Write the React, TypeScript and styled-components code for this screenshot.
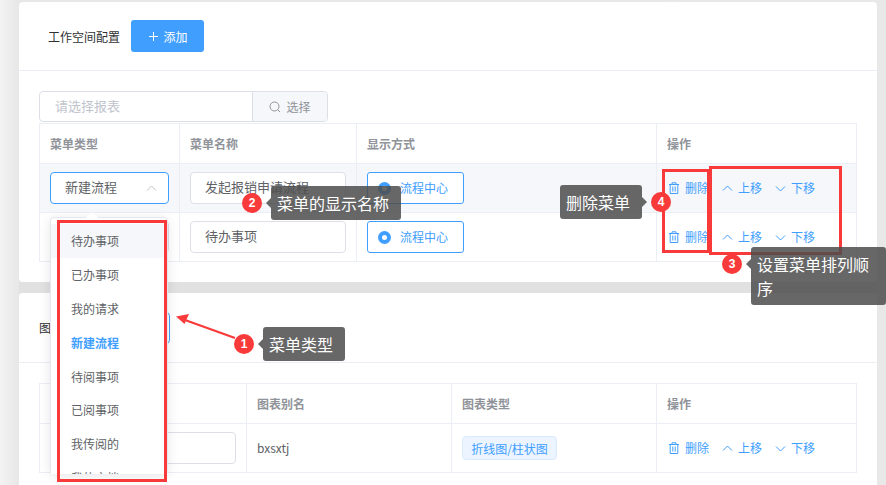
import React from 'react'
import styled, { createGlobalStyle } from 'styled-components'

const blue = '#409eff'
const line = '#ebeef5'
const red = '#f93a3a'

const GlobalStyle = createGlobalStyle`
  html, body {
    margin: 0;
    height: 485px;
    overflow: hidden;
    background: #e8e8e8;
  }
  body, input, button {
    font-family: "Noto Sans CJK SC", "Noto Sans", sans-serif;
  }
`

const Page = styled.div`
  position: relative;
  width: 886px;
  height: 485px;
  overflow: hidden;
  box-sizing: border-box;
  padding: 2px 9px 0 19px;
  background: linear-gradient(90deg, #f3f3f3 0, #e7e7e7 19px, #e8e8e8 100%);
`

const Card = styled.section<{ $height: number }>`
  background: #fff;
  border-radius: 4px;
  height: ${p => p.$height}px;
  box-sizing: border-box;
`

const Gap = styled.div`
  height: 11px;
  background: #e1e1e1;
`

const CardHeader = styled.header<{ $inset: number; $height: number }>`
  display: flex;
  align-items: center;
  gap: 11px;
  height: ${p => p.$height}px;
  box-sizing: border-box;
  padding-left: ${p => p.$inset}px;
  border-bottom: 1px solid ${line};
`

const Title = styled.span`
  font-size: 12px;
  color: #303133;
`

const AddButton = styled.button`
  display: flex;
  align-items: center;
  gap: 5px;
  width: 73px;
  height: 32px;
  justify-content: center;
  border: 0;
  border-radius: 3px;
  background: ${blue};
  color: #fff;
  font-size: 12px;
`

const CardBody = styled.div<{ $top: number }>`
  padding: ${p => p.$top}px 20px 0;
`

const ReportPicker = styled.div`
  display: flex;
  width: 289px;
  height: 31px;
  box-sizing: border-box;
  border: 1px solid #dcdfe6;
  border-radius: 4px;
  font-size: 13px;
  margin-bottom: 1px;
`

const Placeholder = styled.div`
  flex: 1;
  padding-left: 15px;
  line-height: 27px;
  color: #c0c4cc;
`

const PickerButton = styled.div`
  display: flex;
  align-items: center;
  gap: 5px;
  justify-content: center;
  width: 74px;
  border-left: 1px solid #dcdfe6;
  background: #f5f7fa;
  color: #909399;
  font-size: 12px;
  border-radius: 0 3px 3px 0;
`

const Table = styled.div`
  border-top: 1px solid ${line};
  border-left: 1px solid ${line};
`

const Row = styled.div<{ $cols: string; $height: number; $hover?: boolean }>`
  display: grid;
  grid-template-columns: ${p => p.$cols};
  height: ${p => p.$height}px;
  box-sizing: border-box;
  border-bottom: 1px solid ${line};
  background: ${p => (p.$hover ? '#f5f7fa' : '#fff')};
`

const Cell = styled.div`
  display: flex;
  align-items: center;
  box-sizing: border-box;
  padding-left: 10px;
  border-right: 1px solid ${line};
  font-size: 12px;
  color: #606266;
  min-width: 0;
`

const HeadCell = styled(Cell)`
  font-weight: 700;
  color: #909399;
`

const Field = styled.div<{ $width: number; $active?: boolean }>`
  display: flex;
  align-items: center;
  justify-content: space-between;
  width: ${p => p.$width}px;
  height: 32px;
  box-sizing: border-box;
  padding: 0 11px 0 14px;
  border: 1px solid ${p => (p.$active ? blue : '#dcdfe6')};
  border-radius: 4px;
  background: #fff;
  font-size: 13px;
  color: #606266;
  white-space: nowrap;
`

const FieldText = styled.span`
  margin-bottom: 3px;
`

const Label = styled.span`
  margin-bottom: 2px;
`

const RadioBox = styled.div`
  display: flex;
  align-items: center;
  gap: 9px;
  width: 97px;
  height: 32px;
  box-sizing: border-box;
  padding-left: 10px;
  border: 1px solid ${blue};
  border-radius: 3px;
  background: #fff;
  color: ${blue};
  font-size: 12px;
`

const RadioDot = styled.span`
  width: 13px;
  height: 13px;
  border-radius: 50%;
  background: ${blue};
  display: flex;
  align-items: center;
  justify-content: center;
  &::after {
    content: '';
    width: 5px;
    height: 5px;
    border-radius: 50%;
    background: #fff;
  }
`

const Actions = styled.div`
  display: flex;
  align-items: center;
  gap: 13px;
  padding-left: 1px;
`

const Action = styled.span`
  display: flex;
  align-items: center;
  gap: 5px;
  color: ${blue};
  font-size: 12px;
`

const Tag = styled.span`
  display: inline-flex;
  align-items: center;
  justify-content: center;
  width: 95px;
  height: 24px;
  box-sizing: border-box;
  border: 1px solid #d9ecff;
  border-radius: 4px;
  background: #ecf5ff;
  color: ${blue};
  font-size: 12px;
  white-space: nowrap;
`

const Dropdown = styled.div`
  position: absolute;
  left: 50px;
  top: 217px;
  width: 118px;
  height: 257px;
  box-sizing: border-box;
  padding-top: 6px;
  background: #fff;
  border: 1px solid #e4e7ed;
  border-radius: 4px;
  box-shadow: 0 2px 12px rgba(0, 0, 0, 0.1);
  &::before {
    content: '';
    position: absolute;
    left: 35px;
    top: -6px;
    border: 6px solid transparent;
    border-top: 0;
    border-bottom-color: #fff;
  }
`

const OptionList = styled.div`
  height: 250px;
  overflow: hidden;
`

const Option = styled.div<{ $hover?: boolean; $selected?: boolean }>`
  height: 33.9px;
  line-height: 33px;
  padding-left: 20px;
  font-size: 12px;
  font-weight: ${p => (p.$selected ? 700 : 400)};
  color: ${p => (p.$selected ? blue : '#606266')};
  background: ${p => (p.$hover ? '#f5f7fa' : '#fff')};
`

const Highlight = styled.div<{ $x: number; $y: number; $w: number; $h: number }>`
  position: absolute;
  left: ${p => p.$x}px;
  top: ${p => p.$y}px;
  width: ${p => p.$w}px;
  height: ${p => p.$h}px;
  box-sizing: border-box;
  border: 3px solid ${red};
`

const Callout = styled.div<{ $x: number; $y: number; $alignTop?: boolean }>`
  position: absolute;
  left: ${p => p.$x}px;
  top: ${p => p.$y}px;
  display: flex;
  align-items: ${p => (p.$alignTop ? 'flex-start' : 'center')};
  gap: 9px;
`

const Badge = styled.span<{ $offset?: number }>`
  flex: none;
  width: 20px;
  height: 20px;
  margin-top: ${p => p.$offset ?? 0}px;
  border-radius: 50%;
  background: ${red};
  color: #fff;
  font-size: 12px;
  line-height: 20px;
  text-align: center;
  font-family: "Liberation Sans", sans-serif;
  font-weight: 700;
`

const Tip = styled.div<{ $width: number; $side?: 'left' | 'right'; $arrowTop?: number }>`
  position: relative;
  width: ${p => p.$width}px;
  box-sizing: border-box;
  padding: 5px 6px;
  border-radius: 3px;
  background: rgba(76, 76, 76, 0.85);
  color: #fff;
  font-size: 16px;
  line-height: 24px;
  &::before {
    content: '';
    position: absolute;
    top: ${p => (p.$arrowTop !== undefined ? `${p.$arrowTop}px` : '50%')};
    margin-top: -5px;
    ${p => (p.$side === 'right' ? 'right: -5px;' : 'left: -5px;')}
    border: 5px solid transparent;
    ${p => (p.$side === 'right' ? 'border-right: 0; border-left-color: rgba(76, 76, 76, 0.85);' : 'border-left: 0; border-right-color: rgba(76, 76, 76, 0.85);')}
  }
`

const ArrowSvg = styled.svg`
  position: absolute;
  left: 170px;
  top: 308px;
`

const Plus = () => (
  <svg width="11" height="11" viewBox="0 0 11 11" fill="none" stroke="#fff" strokeWidth="1">
    <path d="M5.500 1v9M1 5.500h9" />
  </svg>
)

const SearchIcon = () => (
  <svg width="12" height="12" viewBox="0 0 12 12" fill="none" stroke="#909399" strokeWidth="1">
    <circle cx="5.500" cy="5.500" r="4.500" />
    <path d="M9 9l2 2" />
  </svg>
)

const Trash = () => (
  <svg width="12" height="12" viewBox="0 0 12 12" fill="none" stroke={blue} strokeWidth="1">
    <path d="M1 2.500h10M4 2.500V.8h4v1.700M2.200 2.500v9h7.600v-9M4.800 4.500v5M7.200 4.500v5" />
  </svg>
)

const Chevron = ({ up, color = blue }: { up?: boolean; color?: string }) => (
  <svg width="11" height="11" viewBox="0 0 11 11" fill="none" stroke={color} strokeWidth="1">
    <path d={up ? 'M1 7.500L5.500 3 10 7.500' : 'M1 3.500L5.500 8 10 3.500'} />
  </svg>
)

const RowActions = () => (
  <Actions>
    <Action><Trash /><Label>删除</Label></Action>
    <Action><Chevron up /><Label>上移</Label></Action>
    <Action><Chevron /><Label>下移</Label></Action>
  </Actions>
)

const menuCols = '140px 177px 300px 200px'
const chartCols = '207px 205px 205px 200px'
const options = ['待办事项', '已办事项', '我的请求', '新建流程', '待阅事项', '已阅事项', '我传阅的', '我的文档']

export default function App() {
  return (
    <Page>
      <GlobalStyle />
      <Card $height={280}>
        <CardHeader $inset={29} $height={69}>
          <Title>工作空间配置</Title>
          <AddButton><Plus />添加</AddButton>
        </CardHeader>
        <CardBody $top={20}>
          <ReportPicker>
            <Placeholder>请选择报表</Placeholder>
            <PickerButton><SearchIcon />选择</PickerButton>
          </ReportPicker>
          <Table>
            <Row $cols={menuCols} $height={40}>
              <HeadCell>菜单类型</HeadCell>
              <HeadCell>菜单名称</HeadCell>
              <HeadCell>显示方式</HeadCell>
              <HeadCell>操作</HeadCell>
            </Row>
            <Row $cols={menuCols} $height={49} $hover>
              <Cell>
                <Field $width={119} $active><FieldText>新建流程</FieldText><Chevron up color="#c0c4cc" /></Field>
              </Cell>
              <Cell><Field $width={156}><FieldText>发起报销申请流程</FieldText></Field></Cell>
              <Cell><RadioBox><RadioDot /><Label>流程中心</Label></RadioBox></Cell>
              <Cell><RowActions /></Cell>
            </Row>
            <Row $cols={menuCols} $height={49}>
              <Cell><Field $width={119}><FieldText>待办事项</FieldText></Field></Cell>
              <Cell><Field $width={156}><FieldText>待办事项</FieldText></Field></Cell>
              <Cell><RadioBox><RadioDot /><Label>流程中心</Label></RadioBox></Cell>
              <Cell><RowActions /></Cell>
            </Row>
          </Table>
        </CardBody>
      </Card>
      <Gap />
      <Card $height={300}>
        <CardHeader $inset={20} $height={70}>
          <Title>图表配置</Title>
          <Field $width={72} $active />
        </CardHeader>
        <CardBody $top={20}>
          <Table>
            <Row $cols={chartCols} $height={40}>
              <HeadCell>图表名称</HeadCell>
              <HeadCell>图表别名</HeadCell>
              <HeadCell>图表类型</HeadCell>
              <HeadCell>操作</HeadCell>
            </Row>
            <Row $cols={chartCols} $height={49}>
              <Cell><Field $width={186} /></Cell>
              <Cell><Label>bxsxtj</Label></Cell>
              <Cell><Tag>折线图/柱状图</Tag></Cell>
              <Cell><RowActions /></Cell>
            </Row>
          </Table>
        </CardBody>
      </Card>

      <Dropdown>
        <OptionList>
          {options.map((o, i) => (
            <Option key={o} $hover={i === 0} $selected={i === 3}>{o}</Option>
          ))}
        </OptionList>
      </Dropdown>

      <Highlight $x={57} $y={220} $w={110} $h={262} />
      <Highlight $x={662} $y={169} $w={48} $h={84} />
      <Highlight $x={709} $y={166} $w={133} $h={89} />

      <ArrowSvg width="70" height="40" viewBox="0 0 70 40">
        <path d="M65 30L15 12" stroke={red} strokeWidth="2.200" />
        <path d="M6 8.500L19 6L14.500 16Z" fill={red} />
      </ArrowSvg>

      <Callout $x={242} $y={186}>
        <Badge>2</Badge>
        <Tip $width={130}>菜单的显示名称</Tip>
      </Callout>
      <Callout $x={560} $y={185}>
        <Tip $width={82} $side="right">删除菜单</Tip>
        <Badge>4</Badge>
      </Callout>
      <Callout $x={722} $y={247} $alignTop>
        <Badge $offset={7}>3</Badge>
        <Tip $width={135} $arrowTop={17}>设置菜单排列顺序</Tip>
      </Callout>
      <Callout $x={234} $y={327}>
        <Badge>1</Badge>
        <Tip $width={82}>菜单类型</Tip>
      </Callout>
    </Page>
  )
}
